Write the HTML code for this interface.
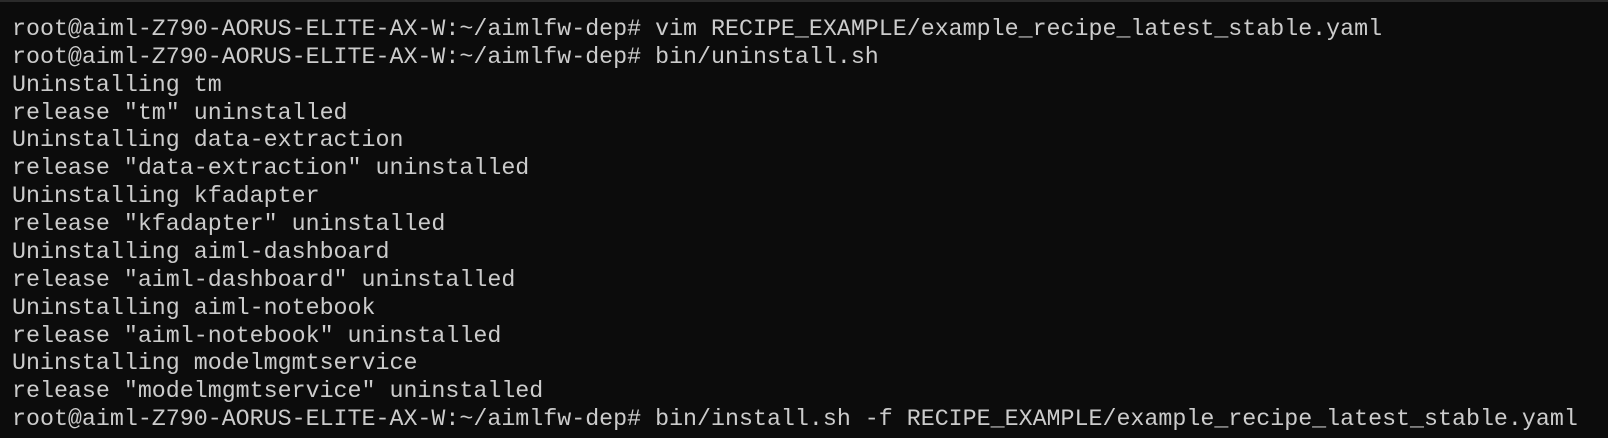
<!DOCTYPE html>
<html><head><style>
html,body{margin:0;padding:0;background:#0c0c0c;width:1608px;height:438px;overflow:hidden}
body{border-top:2px solid #2b2b2b;box-sizing:border-box;position:relative}
.l{position:absolute;left:12px;white-space:pre;font-family:"Liberation Mono","DejaVu Sans Mono",monospace;font-size:23.3px;line-height:28px;color:#cccccc}
</style></head><body>
<div class="l" style="top:13px">root@aiml-Z790-AORUS-ELITE-AX-W:~/aimlfw-dep# vim RECIPE_EXAMPLE/example_recipe_latest_stable.yaml</div>
<div class="l" style="top:40.9px">root@aiml-Z790-AORUS-ELITE-AX-W:~/aimlfw-dep# bin/uninstall.sh</div>
<div class="l" style="top:68.7px">Uninstalling tm</div>
<div class="l" style="top:96.6px">release "tm" uninstalled</div>
<div class="l" style="top:124.4px">Uninstalling data-extraction</div>
<div class="l" style="top:152.3px">release "data-extraction" uninstalled</div>
<div class="l" style="top:180.2px">Uninstalling kfadapter</div>
<div class="l" style="top:208px">release "kfadapter" uninstalled</div>
<div class="l" style="top:235.9px">Uninstalling aiml-dashboard</div>
<div class="l" style="top:263.7px">release "aiml-dashboard" uninstalled</div>
<div class="l" style="top:291.6px">Uninstalling aiml-notebook</div>
<div class="l" style="top:319.5px">release "aiml-notebook" uninstalled</div>
<div class="l" style="top:347.3px">Uninstalling modelmgmtservice</div>
<div class="l" style="top:375.2px">release "modelmgmtservice" uninstalled</div>
<div class="l" style="top:403px">root@aiml-Z790-AORUS-ELITE-AX-W:~/aimlfw-dep# bin/install.sh -f RECIPE_EXAMPLE/example_recipe_latest_stable.yaml</div>
</body></html>
